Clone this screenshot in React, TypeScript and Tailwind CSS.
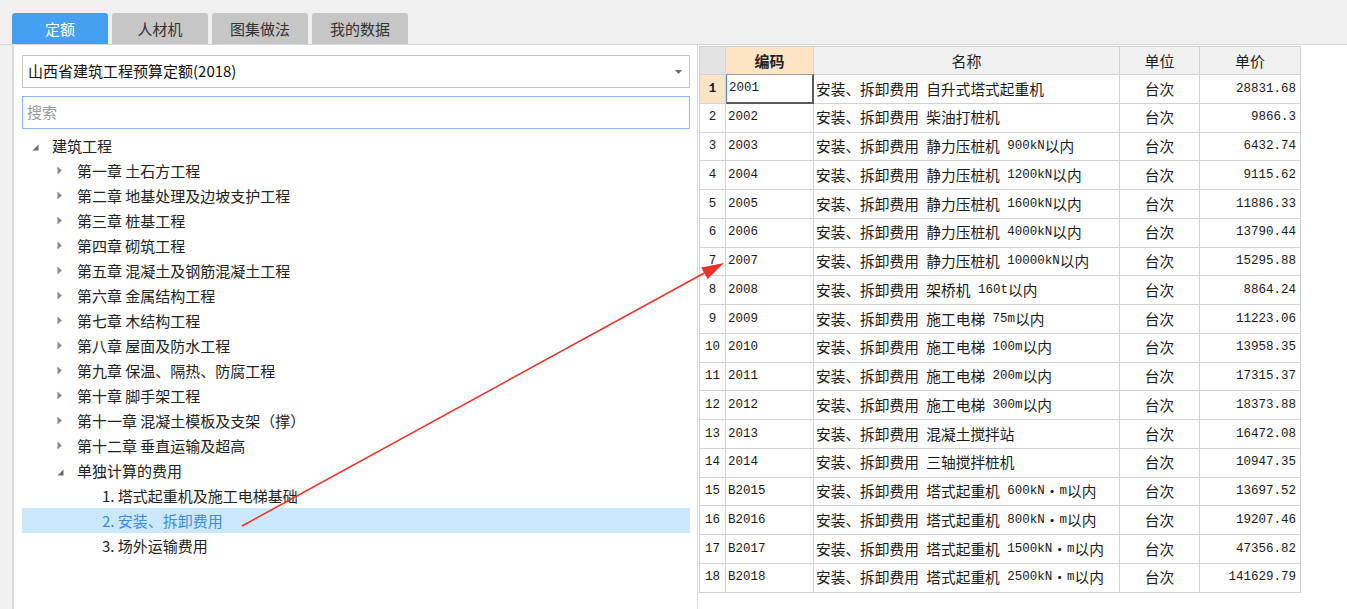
import React from "react";

const CJK = "font-['Noto_Sans_CJK_SC','Noto_Sans',sans-serif]";
const MONO = "font-['Liberation_Mono','Noto_Sans_CJK_SC',monospace]";

function Mixed({ text }: { text: string }) {
  const parts = text.split(/([\x20-\x7e]+)/).filter((p) => p.length > 0);
  return (
    <>
      {parts.map((p, i) =>
        /^[\x20-\x7e]+$/.test(p) ? (
          <span key={i} className={`${MONO} text-[12.5px] whitespace-pre`}>
            {p}
          </span>
        ) : (
          <span key={i}>{p}</span>
        )
      )}
    </>
  );
}

type TreeItem = {
  level: number;
  text: string;
  icon: "open" | "closed" | "none";
  selected?: boolean;
};

const tree: TreeItem[] = [
  { level: 0, text: "建筑工程", icon: "open" },
  { level: 1, text: "第一章 土石方工程", icon: "closed" },
  { level: 1, text: "第二章 地基处理及边坡支护工程", icon: "closed" },
  { level: 1, text: "第三章 桩基工程", icon: "closed" },
  { level: 1, text: "第四章 砌筑工程", icon: "closed" },
  { level: 1, text: "第五章 混凝土及钢筋混凝土工程", icon: "closed" },
  { level: 1, text: "第六章 金属结构工程", icon: "closed" },
  { level: 1, text: "第七章 木结构工程", icon: "closed" },
  { level: 1, text: "第八章 屋面及防水工程", icon: "closed" },
  { level: 1, text: "第九章 保温、隔热、防腐工程", icon: "closed" },
  { level: 1, text: "第十章 脚手架工程", icon: "closed" },
  { level: 1, text: "第十一章 混凝土模板及支架（撑）", icon: "closed" },
  { level: 1, text: "第十二章 垂直运输及超高", icon: "closed" },
  { level: 1, text: "单独计算的费用", icon: "open" },
  { level: 2, text: "1. 塔式起重机及施工电梯基础", icon: "none" },
  { level: 2, text: "2. 安装、拆卸费用", icon: "none", selected: true },
  { level: 2, text: "3. 场外运输费用", icon: "none" },
];

const P = "安装、拆卸费用 ";
const rows: [string, string, string][] = [
  ["2001", P + "自升式塔式起重机", "28831.68"],
  ["2002", P + "柴油打桩机", "9866.3"],
  ["2003", P + "静力压桩机 900kN以内", "6432.74"],
  ["2004", P + "静力压桩机 1200kN以内", "9115.62"],
  ["2005", P + "静力压桩机 1600kN以内", "11886.33"],
  ["2006", P + "静力压桩机 4000kN以内", "13790.44"],
  ["2007", P + "静力压桩机 10000kN以内", "15295.88"],
  ["2008", P + "架桥机 160t以内", "8864.24"],
  ["2009", P + "施工电梯 75m以内", "11223.06"],
  ["2010", P + "施工电梯 100m以内", "13958.35"],
  ["2011", P + "施工电梯 200m以内", "17315.37"],
  ["2012", P + "施工电梯 300m以内", "18373.88"],
  ["2013", P + "混凝土搅拌站", "16472.08"],
  ["2014", P + "三轴搅拌桩机", "10947.35"],
  ["B2015", P + "塔式起重机 600kN・m以内", "13697.52"],
  ["B2016", P + "塔式起重机 800kN・m以内", "19207.46"],
  ["B2017", P + "塔式起重机 1500kN・m以内", "47356.82"],
  ["B2018", P + "塔式起重机 2500kN・m以内", "141629.79"],
];

function TreeIcon({ kind }: { kind: TreeItem["icon"] }) {
  if (kind === "open")
    return (
      <svg width="7" height="7" viewBox="0 0 7 7" className="mt-[3px]">
        <polygon points="6.5,0.5 6.5,6.5 0.5,6.5" fill="#6b6b6b" />
      </svg>
    );
  if (kind === "closed")
    return (
      <svg width="5" height="9" viewBox="0 0 5 9">
        <polygon points="0.5,0.5 4.8,4.5 0.5,8.5" fill="#8a8a8a" />
      </svg>
    );
  return null;
}

export default function App() {
  const tabs = ["定额", "人材机", "图集做法", "我的数据"];
  return (
    <div className={`relative w-[1347px] h-[609px] bg-[#f0f0f0] overflow-hidden ${CJK} text-[#1f1f1f]`}>
      {/* tabs */}
      <div className="flex h-[44px] items-end pl-[12px] gap-[4px]">
        {tabs.map((t, i) => (
          <div
            key={t}
            className={`w-[96px] h-[31px] rounded-t-[3px] flex items-center justify-center text-[15px] leading-none ${
              i === 0 ? "bg-[#459ff3] text-white" : "bg-[#c6c6c6] text-[#333]"
            }`}
          >
            {t}
          </div>
        ))}
      </div>

      <div className="flex h-[565px] border-t border-[#d6d6d6]">
        {/* left panel */}
        <div className="ml-[12px] w-[686px] bg-white border-l-2 border-r border-[#dcdcdc] pl-[8px] pr-[7px] pt-[10px]">
          <div className="relative h-[33px] w-[668px] border border-[#c4c4c4] flex items-center pl-[5px] text-[15px] text-[#111]">
            山西省建筑工程预算定额(2018)
            <svg width="7" height="4" viewBox="0 0 7 4" className="absolute right-[7px] top-[14px]">
              <polygon points="0,0 7,0 3.5,4" fill="#6a6a6a" />
            </svg>
          </div>
          <div className="mt-[8px] h-[33px] w-[668px] border border-[#86b8f2] flex items-center pl-[4px] text-[15px] text-[#9a9a9a]">
            搜索
          </div>
          <div className="mt-[4px]">
            {tree.map((it, i) => (
              <div
                key={i}
                className={`h-[25px] w-[668px] flex items-center text-[15px] leading-none ${
                  it.selected ? "bg-[#cce8ff] text-[#3a8ae6]" : "text-[#222]"
                }`}
              >
                <div
                  className={`${
                    it.level === 0 ? "ml-[0px]" : it.level === 1 ? "ml-[25px]" : "ml-[50px]"
                  } w-[30px] pl-[10px] flex items-center`}
                >
                  <TreeIcon kind={it.icon} />
                </div>
                <span>{it.text}</span>
              </div>
            ))}
          </div>
        </div>

        {/* right panel */}
        <div className="flex-1 bg-white pl-[1px] pt-[1px]">
          <div className="w-[602px] border-l border-t border-[#d2d2d2]">
            {/* header */}
            <div className="flex h-[28px] text-[15px] leading-none">
              <div className="w-[26px] shrink-0 bg-[#e3e3e3] border-r border-b border-[#d2d2d2]" />
              <div className="w-[88px] shrink-0 bg-[#fde4c4] border-r border-b border-[#d2d2d2] flex items-center justify-center font-bold text-[#222]">
                编码
              </div>
              <div className="w-[306px] shrink-0 bg-[#f0f0f0] border-r border-b border-[#d2d2d2] flex items-center justify-center">
                名称
              </div>
              <div className="w-[80px] shrink-0 bg-[#f0f0f0] border-r border-b border-[#d2d2d2] flex items-center justify-center">
                单位
              </div>
              <div className="w-[101px] shrink-0 bg-[#f0f0f0] border-r border-b border-[#d2d2d2] flex items-center justify-center">
                单价
              </div>
            </div>
            {rows.map(([code, name, price], i) => (
              <div key={code} className="flex h-[28.76px] text-[14.7px] leading-none text-[#1a1a1a]">
                <div
                  className={`w-[26px] shrink-0 border-r border-b border-[#d2d2d2] flex items-center justify-center ${MONO} text-[12.5px] ${
                    i === 0 ? "bg-[#fde4c4] font-bold" : "bg-white"
                  }`}
                >
                  {i + 1}
                </div>
                <div
                  className={`w-[88px] shrink-0 flex items-center pl-[2px] ${MONO} text-[12.5px] ${
                    i === 0
                      ? "border-l border-l-[#4a90e2] border-r-2 border-b-2 border-r-[#5a5a5a] border-b-[#5a5a5a] border-t border-t-[#9a9a9a] -mt-[1px]"
                      : "border-r border-b border-[#d2d2d2]"
                  }`}
                >
                  {code}
                </div>
                <div className="w-[306px] shrink-0 border-r border-b border-[#d2d2d2] flex items-center pl-[2px] whitespace-nowrap overflow-hidden">
                  <Mixed text={name} />
                </div>
                <div className="w-[80px] shrink-0 border-r border-b border-[#d2d2d2] flex items-center justify-center">
                  台次
                </div>
                <div
                  className={`w-[101px] shrink-0 border-r border-b border-[#d2d2d2] flex items-center justify-end pr-[4px] ${MONO} text-[12.5px]`}
                >
                  {price}
                </div>
              </div>
            ))}
          </div>
        </div>
      </div>

      {/* red arrow overlay */}
      <svg className="absolute left-0 top-0 pointer-events-none" width="1347" height="609" viewBox="0 0 1347 609">
        <line x1="242" y1="526" x2="708" y2="271" stroke="#e9342c" strokeWidth="1.6" />
        <polygon points="724,263 707.6,279 701.2,267.5" fill="#e9342c" />
      </svg>
    </div>
  );
}
